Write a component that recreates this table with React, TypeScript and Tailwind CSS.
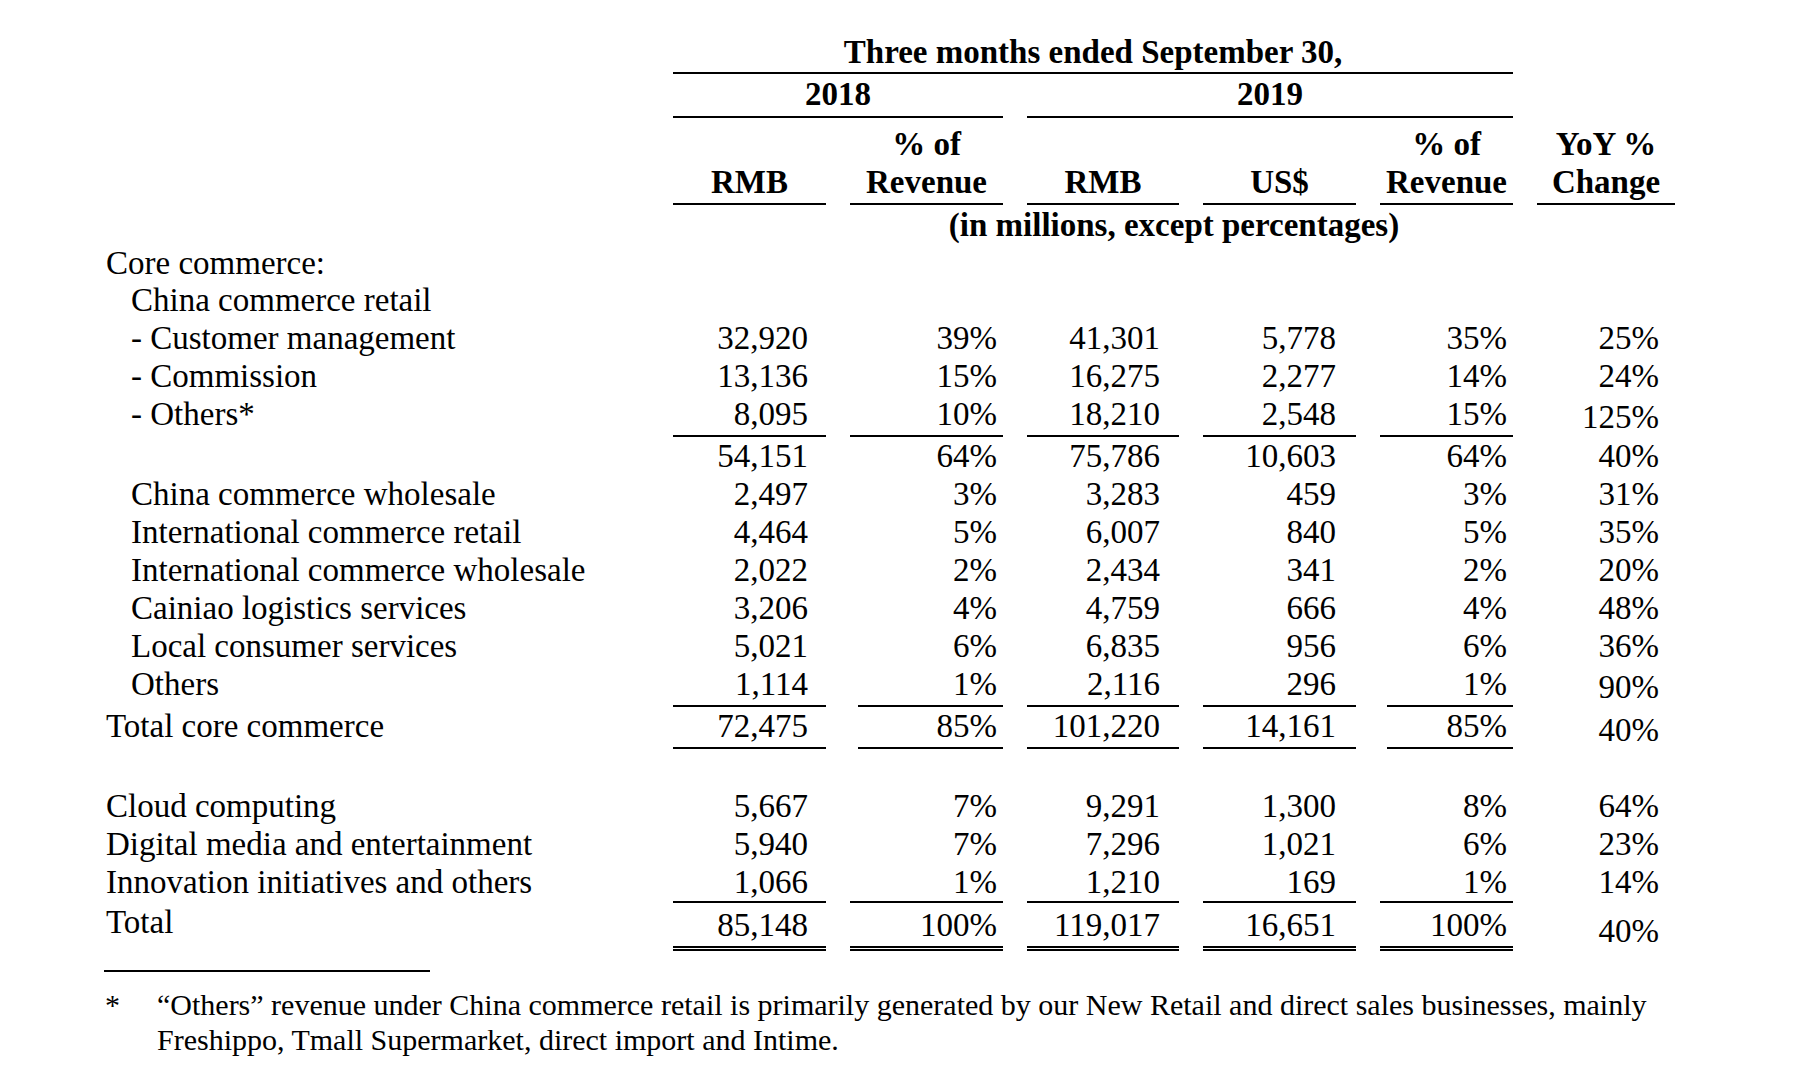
import type { ReactNode } from 'react';

// column layout: label | RMB 2018 | % 2018 | RMB 2019 | US$ 2019 | % 2019 | YoY
const grid = 'grid grid-cols-[649px_153px_153px_152px_153px_133px_138px] gap-x-[24px]';
const padR = ['pr-[18px]', 'pr-[6px]', 'pr-[19px]', 'pr-[20px]', 'pr-[6px]', 'pr-[16px]'];

type Rule = 'sub' | 'plain' | 'double';

const ruleClass: Record<Rule, string> = {
  sub: 'pb-[2px] border-b-2 border-black',
  plain: 'border-b-2 border-black',
  double: 'pt-[3px] pb-[2px] border-b-[5px] border-double border-black',
};

interface DataRowProps {
  label?: string;
  indent?: boolean;
  vals: string[];
  rule?: Rule;
  inset?: boolean;
  yoyPad?: string;
  lead?: string;
}

const DataRow = ({ label = '', indent, vals, rule, inset, yoyPad = '', lead = 'leading-[38px]' }: DataRowProps) => {
  return (
    <div className={`${grid} ${lead}`}>
      <div className={`whitespace-nowrap ${indent ? 'pl-[131px]' : 'pl-[106px]'}`}>{label}</div>
      {vals.map((v, i) => {
        const isYoy = i === 5;
        const lined = rule && !isYoy;
        const shift = inset && i === 1 ? 'ml-[8px]' : inset && i === 4 ? 'ml-[7px]' : '';
        return (
          <div
            key={i}
            className={`text-right whitespace-nowrap ${padR[i]} ${lined ? ruleClass[rule] : ''} ${shift} ${isYoy ? yoyPad : ''}`}
          >
            {v}
          </div>
        );
      })}
    </div>
  );
};

const HeadCell = ({ col, children }: { col: string; children: ReactNode }) => (
  <div className={`${col} flex flex-col justify-end items-center pb-[2px] border-b-2 border-black whitespace-nowrap`}>
    {children}
  </div>
);

export default function App() {
  return (
    <div className="min-h-screen w-full bg-white text-black font-['Liberation_Serif','Times_New_Roman',serif]">
      <div className="pt-[33px] text-[33px]">
        {/* Column headings */}
        <div className={`${grid} font-bold leading-[38px]`}>
          <div className="col-start-2 col-span-5 pb-[1px] border-b-2 border-black text-center whitespace-nowrap">
            Three months ended September 30,
          </div>
        </div>
        <div className={`${grid} font-bold leading-[38px]`}>
          <div className="col-start-2 col-span-2 pt-[1px] pb-[3px] border-b-2 border-black text-center">2018</div>
          <div className="col-start-4 col-span-3 pt-[1px] pb-[3px] border-b-2 border-black text-center">2019</div>
        </div>
        <div className={`${grid} mt-[7px] font-bold leading-[38px]`}>
          <HeadCell col="col-start-2">RMB</HeadCell>
          <HeadCell col="col-start-3">
            <span>% of</span>
            <span>Revenue</span>
          </HeadCell>
          <HeadCell col="col-start-4">RMB</HeadCell>
          <HeadCell col="col-start-5">US$</HeadCell>
          <HeadCell col="col-start-6">
            <span>% of</span>
            <span>Revenue</span>
          </HeadCell>
          <HeadCell col="col-start-7">
            <span>YoY %</span>
            <span>Change</span>
          </HeadCell>
        </div>
        <div className={`${grid} pt-[1px] font-bold leading-[38px]`}>
          <div className="col-start-2 col-span-6 text-center whitespace-nowrap">(in millions, except percentages)</div>
        </div>

        {/* Core commerce */}
        <div className="mt-[1px]">
          <DataRow label="Core commerce:" vals={['', '', '', '', '', '']} lead="leading-[36px]" />
          <DataRow label="China commerce retail" indent vals={['', '', '', '', '', '']} />
          <DataRow label="- Customer management" indent vals={['32,920', '39%', '41,301', '5,778', '35%', '25%']} />
          <DataRow label="- Commission" indent vals={['13,136', '15%', '16,275', '2,277', '14%', '24%']} />
          <DataRow label="- Others*" indent vals={['8,095', '10%', '18,210', '2,548', '15%', '125%']} rule="sub" yoyPad="pt-[3px]" />
          <DataRow vals={['54,151', '64%', '75,786', '10,603', '64%', '40%']} />
          <DataRow label="China commerce wholesale" indent vals={['2,497', '3%', '3,283', '459', '3%', '31%']} />
          <DataRow label="International commerce retail" indent vals={['4,464', '5%', '6,007', '840', '5%', '35%']} />
          <DataRow label="International commerce wholesale" indent vals={['2,022', '2%', '2,434', '341', '2%', '20%']} />
          <DataRow label="Cainiao logistics services" indent vals={['3,206', '4%', '4,759', '666', '4%', '48%']} />
          <DataRow label="Local consumer services" indent vals={['5,021', '6%', '6,835', '956', '6%', '36%']} />
          <DataRow label="Others" indent vals={['1,114', '1%', '2,116', '296', '1%', '90%']} rule="sub" inset yoyPad="pt-[3px]" />
          <DataRow label="Total core commerce" vals={['72,475', '85%', '101,220', '14,161', '85%', '40%']} rule="sub" inset yoyPad="pt-[4px]" />
        </div>

        <div className="h-[38px]" />

        {/* Other segments */}
        <DataRow label="Cloud computing" vals={['5,667', '7%', '9,291', '1,300', '8%', '64%']} />
        <DataRow label="Digital media and entertainment" vals={['5,940', '7%', '7,296', '1,021', '6%', '23%']} />
        <DataRow label="Innovation initiatives and others" vals={['1,066', '1%', '1,210', '169', '1%', '14%']} rule="plain" />
        <DataRow label="Total" vals={['85,148', '100%', '119,017', '16,651', '100%', '40%']} rule="double" yoyPad="pt-[9px]" />

        {/* Footnote */}
        <div className="mt-[19px] ml-[104px] w-[326px] h-[2px] bg-black" />
        <div className="mt-[15px] flex text-[30px] leading-[35px]">
          <span className="ml-[105px] w-[52px] shrink-0">*</span>
          <div>
            <div className="whitespace-nowrap">
              “Others” revenue under China commerce retail is primarily generated by our New Retail and direct sales businesses, mainly
            </div>
            <div className="whitespace-nowrap">Freshippo, Tmall Supermarket, direct import and Intime.</div>
          </div>
        </div>
      </div>
    </div>
  );
}
